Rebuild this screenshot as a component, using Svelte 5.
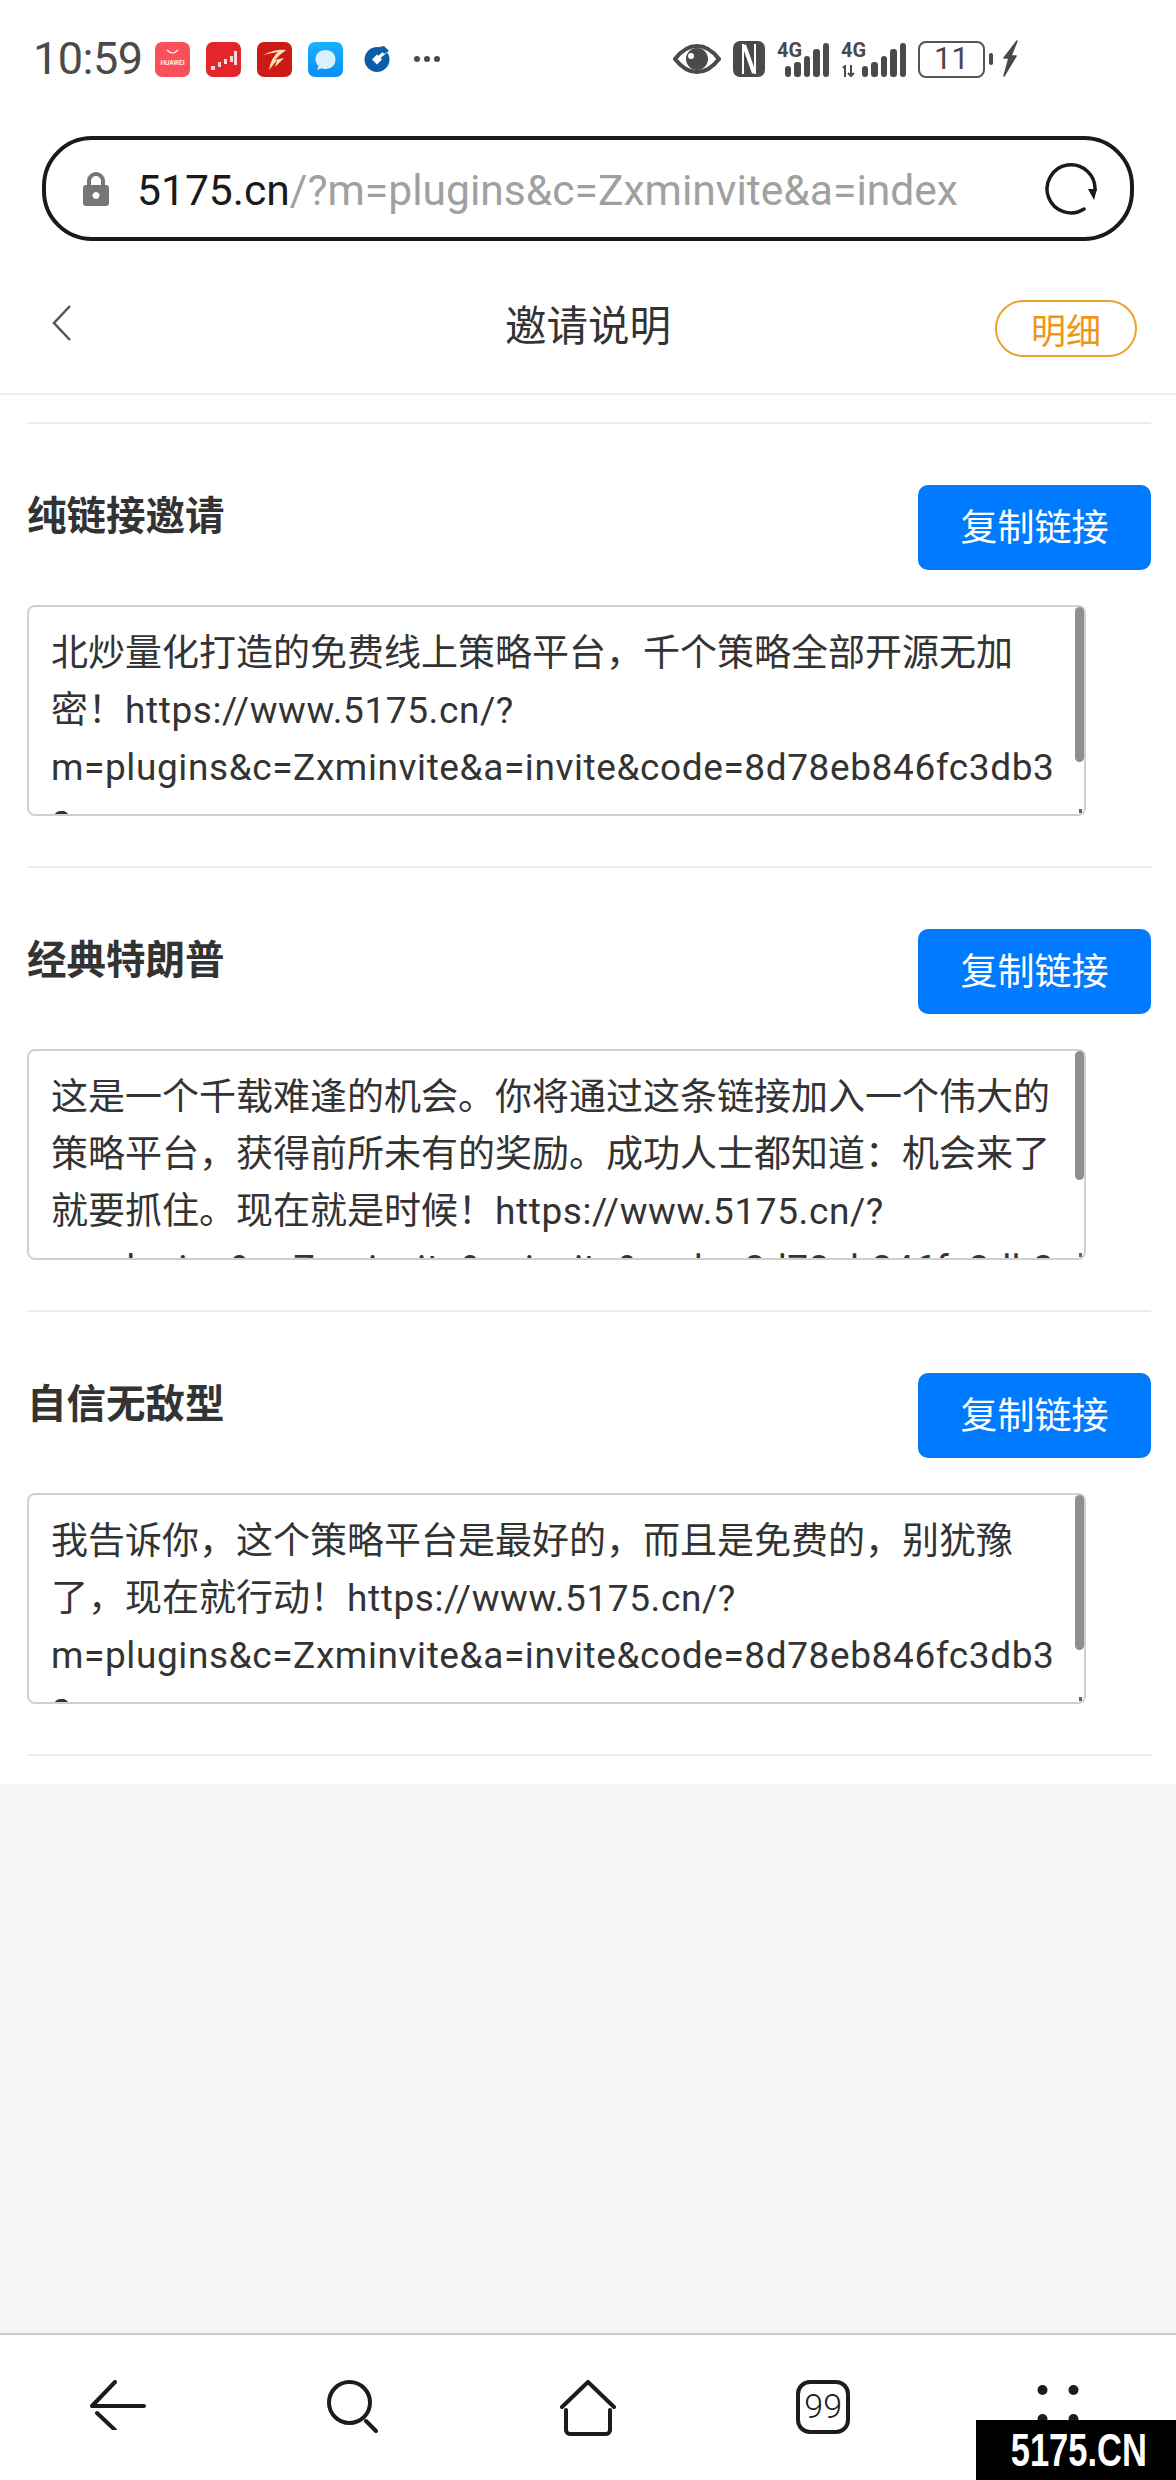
<script lang="ts">
  const link = 'https://www.5175.cn/?m=plugins&c=Zxminvite&a=invite&code=8d78eb846fc3db30';
  const invites = [
    { title: '纯链接邀请', intro: '北炒量化打造的免费线上策略平台，千个策略全部开源无加密！', thumb: 155 },
    { title: '经典特朗普', intro: '这是一个千载难逢的机会。你将通过这条链接加入一个伟大的策略平台，获得前所未有的奖励。成功人士都知道：机会来了就要抓住。现在就是时候！', thumb: 129 },
    { title: '自信无敌型', intro: '我告诉你，这个策略平台是最好的，而且是免费的，别犹豫了，现在就行动！', thumb: 155 }
  ];
  const bars = [11, 15, 21, 28, 34];
</script>

<div class="page">
  <div class="status">
    <div class="status-left">
      <span class="time">10:59</span>
      <div class="apps">
        <svg width="35" height="35" viewBox="0 0 35 35">
          <rect width="35" height="35" rx="7" fill="#f9505a" />
          <path d="M12 8q5.500 6 11 0" fill="none" stroke="#fff" stroke-width="1.200" />
          <text x="17.500" y="23" text-anchor="middle" class="huawei">HUAWEI</text>
        </svg>
        <svg width="35" height="35" viewBox="0 0 35 35">
          <rect width="35" height="35" rx="7" fill="#e3262c" />
          <path d="M5 24h4v4H5zM12 20h3v5h-3zM18 17h3v5h-3zM24 14h3v6h-3zM28 9h3v14h-3z" fill="#fbd9d9" />
        </svg>
        <svg width="35" height="35" viewBox="0 0 35 35">
          <rect width="35" height="35" rx="7" fill="#cc1b16" />
          <path d="M6 13q12-6 23-5-7 5-11 10l9-2-9 9 2-7-8 10q2-12 9-18-7 1-15 3z" fill="#fbe1b4" />
        </svg>
        <svg width="35" height="35" viewBox="0 0 35 35">
          <defs>
            <linearGradient id="msg" x1="0" y1="0" x2="0" y2="1">
              <stop offset="0" stop-color="#19b2ff" />
              <stop offset="1" stop-color="#0a8cf5" />
            </linearGradient>
          </defs>
          <rect width="35" height="35" rx="7" fill="url(#msg)" />
          <path d="M17.500 8c6 0 10 4 10 9.500S23.500 27 17.500 27c-1.500 0-3-.3-4-.8L9 28l1.500-4C8.800 22.300 7.500 20 7.500 17.500 7.500 12 11.500 8 17.500 8z" fill="#d9f0ff" />
        </svg>
        <svg class="bank" width="26" height="26" viewBox="0 0 26 26">
          <circle cx="13" cy="13.500" r="12.500" fill="#0a5ea8" />
          <path d="M13 8.500l5 5-5 5-5-5z" fill="#fff" />
          <path d="M14 12 25 3" stroke="#fff" stroke-width="3" />
          <path d="M15 1l5-1 5 5-5 3z" fill="#0a5ea8" />
        </svg>
        <svg class="more" width="28" height="8" viewBox="0 0 28 8">
          <circle cx="4" cy="4" r="3" /><circle cx="14" cy="4" r="3" /><circle cx="24" cy="4" r="3" />
        </svg>
      </div>
    </div>
    <div class="status-right">
      <svg width="48" height="34" viewBox="0 0 48 34">
        <path d="M2 17Q12 4 24 4t22 13Q36 30 24 30T2 17z" fill="none" stroke="#4a4a4a" stroke-width="4" />
        <circle cx="24" cy="17" r="11" fill="#4a4a4a" />
        <circle cx="18" cy="14" r="3" fill="#fff" />
      </svg>
      <svg width="32" height="36" viewBox="0 0 32 36">
        <rect width="32" height="36" rx="7" fill="#4a4a4a" />
        <path d="M10 3v30M22 3v30" stroke="#fff" stroke-width="2" />
        <path d="M11 4 21 32" stroke="#fff" stroke-width="4" />
      </svg>
      <div class="signal">
        <span class="net">4G</span>
        <div class="bars">
          {#each bars as h}
            <i style="height: {h}px"></i>
          {/each}
        </div>
      </div>
      <div class="signal wide">
        <span class="net">4G</span>
        <svg class="updown" width="13" height="12" viewBox="0 0 13 12">
          <path d="M3 12V1L1 3M9 0v11l3-3M9 11 6 8" fill="none" stroke="#4a4a4a" stroke-width="2" />
        </svg>
        <div class="bars">
          {#each bars as h}
            <i style="height: {h}px"></i>
          {/each}
        </div>
      </div>
      <div class="battery">11</div>
      <span class="nub"></span>
      <svg width="16" height="38" viewBox="0 0 16 38">
        <path d="M15 1 2 18h5L2 36l12-20H9z" fill="#4a4a4a" stroke="#4a4a4a" stroke-width="1.500" stroke-linejoin="round" />
      </svg>
    </div>
  </div>

  <div class="urlbar">
    <svg class="lock" width="26" height="34" viewBox="0 0 26 34">
      <path d="M6 14V9a7 7 0 0 1 14 0v5" fill="none" stroke="#767676" stroke-width="4" />
      <path fill-rule="evenodd" d="M3 13h20a3 3 0 0 1 3 3v15a3 3 0 0 1-3 3H3a3 3 0 0 1-3-3V16a3 3 0 0 1 3-3zM13 20a3.500 3.500 0 1 0 .01 0z" fill="#767676" />
    </svg>
    <div class="url"><span class="host">5175.cn</span>/?m=plugins&amp;c=Zxminvite&amp;a=index</div>
    <svg width="54" height="58" viewBox="0 0 54 58">
      <path d="M40 49A24 24 0 1 1 51 30" fill="none" stroke="#1a1a1a" stroke-width="3.500" stroke-linecap="round" />
      <path d="M44 29h9l-3 11z" fill="#1a1a1a" />
    </svg>
  </div>

  <header class="head">
    <svg class="chev" width="19" height="36" viewBox="0 0 19 36">
      <path d="M18 1 2 18l16 17" fill="none" stroke="#555" stroke-width="2.500" />
    </svg>
    <h1>邀请说明</h1>
    <button class="pill">明细</button>
  </header>

  <main class="content">
    {#each invites as item}
      <section class="invite">
        <div class="invite-top">
          <h2>{item.title}</h2>
          <button class="copy">复制链接</button>
        </div>
        <div class="box">
          <div class="ta">{item.intro}<span class="latin">{link}</span></div>
          <span class="thumb" style="height: {item.thumb}px"></span>
          <span class="grip"></span>
        </div>
      </section>
    {/each}
  </main>

  <div class="fill"></div>

  <nav class="nav">
    <svg width="56" height="50" viewBox="0 0 56 50">
      <path d="M25 2 2 26h52M7 33l18 17" fill="none" stroke="#1c1c1c" stroke-width="4" stroke-linecap="round" stroke-linejoin="round" />
    </svg>
    <svg width="52" height="53" viewBox="0 0 52 53">
      <circle cx="22.500" cy="22.500" r="20.500" fill="none" stroke="#1c1c1c" stroke-width="4" />
      <path d="M39 41l10 10" fill="none" stroke="#1c1c1c" stroke-width="4" stroke-linecap="round" />
    </svg>
    <svg width="58" height="56" viewBox="0 0 58 56">
      <path d="M3 27 29 2l26 25" fill="none" stroke="#1c1c1c" stroke-width="4" stroke-linecap="round" stroke-linejoin="round" />
      <path d="M7 30v20a4 4 0 0 0 4 4h36a4 4 0 0 0 4-4V30" fill="none" stroke="#1c1c1c" stroke-width="4" stroke-linecap="round" />
    </svg>
    <div class="tabs">99</div>
    <svg width="60" height="60" viewBox="0 0 60 60">
      <circle cx="14.500" cy="10" r="5" fill="#1c1c1c" /><circle cx="45.500" cy="10" r="5" fill="#1c1c1c" />
      <circle cx="14.500" cy="39" r="5" fill="#1c1c1c" /><circle cx="45.500" cy="39" r="5" fill="#1c1c1c" />
    </svg>
  </nav>

  <div class="mark"><span>5175.CN</span></div>
</div>

<style>
  :global(body) {
    margin: 0;
    background: #fff;
  }

  .page {
    position: relative;
    display: flex;
    flex-direction: column;
    height: 2480px;
    overflow: hidden;
    font-family: Roboto, "Noto Sans CJK SC", sans-serif;
    color: #333;
  }

  button {
    font-family: inherit;
    padding: 0;
    cursor: pointer;
  }

  /* status bar */
  .status {
    display: flex;
    justify-content: space-between;
    align-items: center;
    height: 118px;
    padding: 0 158px 0 33px;
    color: #4a4a4a;
  }

  .status-left,
  .status-right {
    display: flex;
    align-items: center;
  }

  .time {
    width: 122px;
    font-size: 45px;
    line-height: 46px;
    letter-spacing: -0.5px;
  }

  .apps {
    display: flex;
    align-items: center;
    gap: 16px;
  }

  .huawei {
    font-size: 6.500px;
    font-weight: 500;
    fill: #fff;
  }

  .bank {
    margin-left: 5px;
  }

  .more {
    margin-left: 7px;
    fill: #4a4a4a;
  }

  .status-right {
    gap: 12px;
  }

  .signal {
    position: relative;
    width: 52px;
    height: 36px;
  }

  .signal.wide {
    width: 65px;
  }

  .net {
    position: absolute;
    left: 0;
    top: -1px;
    font-size: 21px;
    line-height: 20px;
    font-weight: 700;
    transform: scaleX(0.95);
    transform-origin: left;
  }

  .updown {
    position: absolute;
    left: 1px;
    bottom: 0;
  }

  .bars {
    position: absolute;
    right: 0;
    bottom: 0;
    display: flex;
    align-items: flex-end;
    gap: 3px;
  }

  .bars i {
    width: 6.500px;
    border-radius: 3px;
    background: #4a4a4a;
  }

  .battery {
    box-sizing: border-box;
    width: 67px;
    height: 37px;
    border: 2.500px solid #555;
    border-radius: 8px;
    text-align: center;
    font-size: 31px;
    line-height: 32px;
  }

  .nub {
    width: 4px;
    height: 12px;
    margin-left: -8px;
    margin-right: -3px;
    border-radius: 2px;
    background: #4a4a4a;
  }

  /* browser address bar */
  .urlbar {
    box-sizing: border-box;
    display: flex;
    align-items: center;
    width: 1092px;
    height: 105px;
    margin: 18px 0 0 42px;
    padding: 0 32px 0 37px;
    border: 4px solid #1a1a1a;
    border-radius: 50px;
  }

  .url {
    flex: 1;
    margin-left: 28px;
    padding-top: 3px;
    font-size: 42.600px;
    color: #a0a0a0;
    white-space: nowrap;
  }

  .host {
    color: #1a1a1a;
  }

  /* page header */
  .head {
    display: grid;
    grid-template-columns: 1fr auto 1fr;
    align-items: center;
    height: 141px;
    padding: 11px 39px 0;
    border-bottom: 2px solid #eee;
  }

  .chev {
    margin-left: 13px;
  }

  .head h1 {
    margin: 0;
    font-size: 41.500px;
    font-weight: 400;
  }

  .pill {
    box-sizing: border-box;
    justify-self: end;
    width: 142px;
    height: 57px;
    margin-top: 11px;
    border: 2px solid #eba32e;
    border-radius: 29px;
    background: #fff;
    color: #f0951a;
    font-size: 35px;
  }

  /* invite list */
  .content {
    margin: 0;
    padding: 27px 25px 28px 27px;
  }

  .invite {
    box-sizing: border-box;
    height: 444px;
    padding-top: 61px;
    border-top: 2px solid #eee;
  }

  .invite:last-child {
    height: 446px;
    border-bottom: 2px solid #eee;
  }

  .invite-top {
    display: flex;
    justify-content: space-between;
    align-items: flex-start;
  }

  .invite-top h2 {
    margin: 2px 0 0;
    font-size: 39.500px;
    line-height: 60px;
    font-weight: 700;
  }

  .copy {
    width: 233px;
    height: 85px;
    padding-bottom: 6px;
    border: 0;
    border-radius: 10px;
    background: #007bff;
    color: #fff;
    font-size: 37px;
  }

  .box {
    position: relative;
    width: 1059px;
    height: 211px;
    margin-top: 35px;
  }

  .ta {
    box-sizing: border-box;
    width: 100%;
    height: 100%;
    padding: 18px 23px 0 22px;
    border: 2px solid #d0d0d0;
    border-radius: 8px;
    overflow: hidden;
    background: #fff;
    font-size: 37px;
    line-height: 57px;
    white-space: pre-wrap;
    overflow-wrap: break-word;
  }

  .latin {
    letter-spacing: 0.6px;
  }

  .thumb {
    position: absolute;
    top: 2px;
    right: 2px;
    width: 9px;
    border-radius: 5px;
    background: #8f8f8f;
  }

  .grip {
    position: absolute;
    right: 4px;
    bottom: 3px;
    width: 3px;
    height: 4px;
    background: #666;
  }

  .fill {
    flex: 1;
    background: #f6f6f6;
  }

  /* bottom navigation */
  .nav {
    box-sizing: border-box;
    display: grid;
    grid-template-columns: repeat(5, 1fr);
    justify-items: center;
    align-items: start;
    height: 147px;
    padding-top: 45px;
    border-top: 2px solid #ccc;
  }

  .tabs {
    box-sizing: border-box;
    width: 54px;
    height: 54px;
    border: 4px solid #1c1c1c;
    border-radius: 14px;
    color: #1c1c1c;
    text-align: center;
    font-size: 34px;
    font-weight: 300;
    line-height: 44px;
  }

  .mark {
    position: absolute;
    right: 0;
    bottom: 0;
    width: 200px;
    height: 60px;
    background: #000;
    color: #fff;
    text-align: center;
    font-family: "Liberation Sans", sans-serif;
    font-size: 46px;
    line-height: 60px;
    font-weight: 700;
  }

  .mark span {
    display: inline-block;
    transform: translateX(3px) scaleX(0.75);
  }
</style>
